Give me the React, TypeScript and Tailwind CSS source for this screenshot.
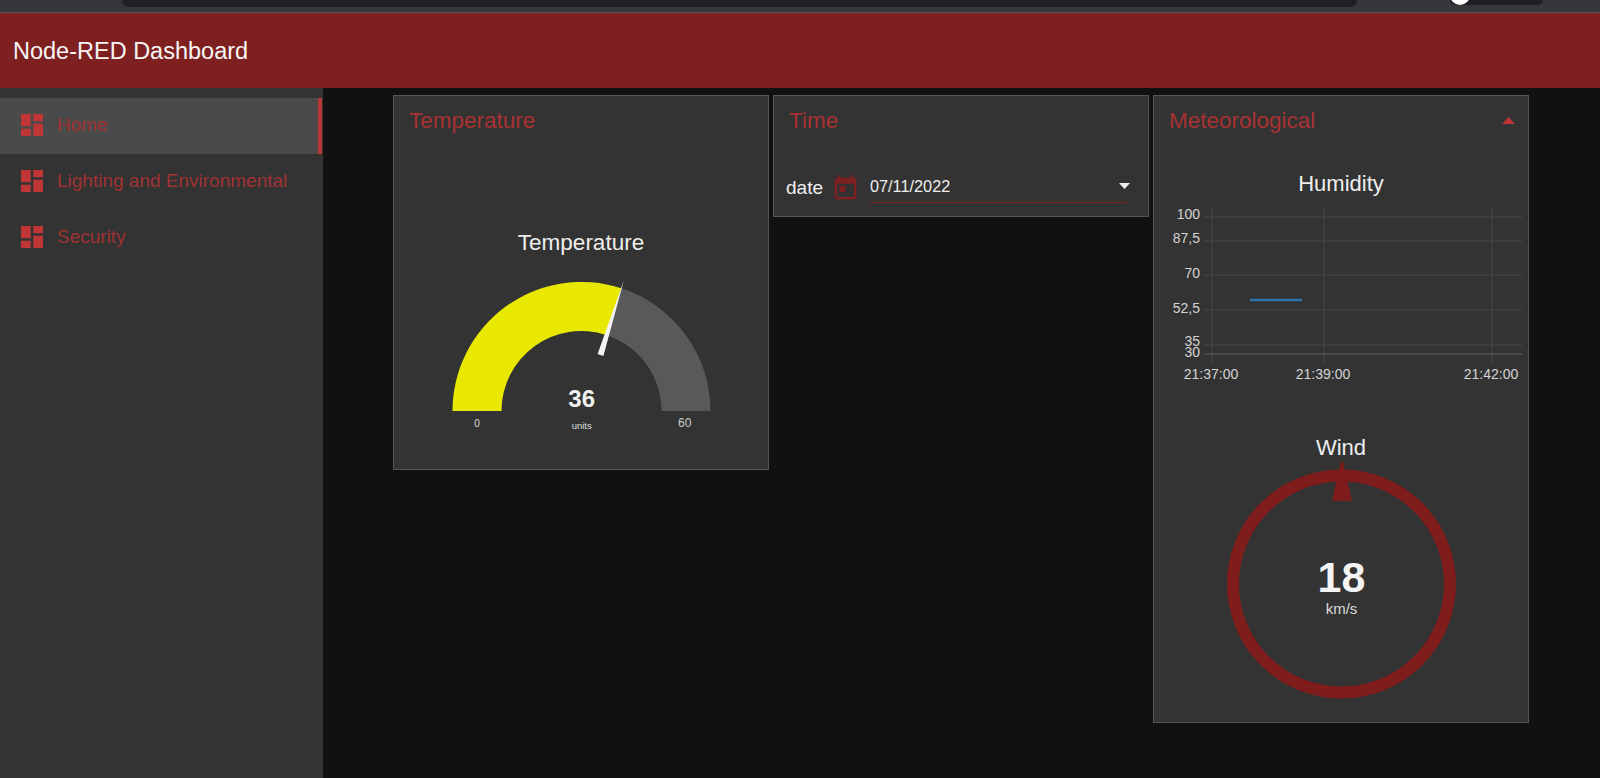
const Dash = () => (
  <svg width="22" height="22" viewBox="3 3 18 18" className="shrink-0 fill-[#c03535]">
    <path d="M3 13h8V3H3v10zm0 8h8v-6H3v6zm10 0h8V11h-8v10zm0-18v6h8V3h-8z" />
  </svg>
);

const NavItem = ({ label, active }: { label: string; active?: boolean }) => (
  <div
    className={`flex h-[56px] items-center gap-[14px] pb-[2px] pl-[21px] ${
      active ? "mr-px border-r-4 border-[#b83636] bg-[#4a4a4a]" : ""
    }`}
  >
    <Dash />
    <span className="text-[19px] text-[#a03232]">{label}</span>
  </div>
);

const Card = ({
  title,
  className,
  children,
  collapse,
}: {
  title: string;
  className: string;
  children: React.ReactNode;
  collapse?: boolean;
}) => (
  <section className={`flex w-[376px] shrink-0 flex-col border border-[#555555] bg-[#333333] ${className}`}>
    <header className="flex h-[50px] items-center justify-between pr-[13px] pb-[1px] pl-[15px]">
      <h2 className="text-[22.5px] leading-[26px] text-[#a83232]">{title}</h2>
      {collapse && (
        <svg width="13" height="7" viewBox="0 0 13 7" className="fill-[#c03535]">
          <path d="M6.5 0 13 7H0z" />
        </svg>
      )}
    </header>
    {children}
  </section>
);

const Gauge = () => (
  <svg width="280" height="170" viewBox="0 0 280 170" className="block">
    <path d="M11.5 141A129 129 0 0 1 180.4 18.3L165.2 64.9A80 80 0 0 0 60.5 141Z" fill="#e8e800" />
    <path d="M180.4 18.3A129 129 0 0 1 269.5 141L220.5 141A80 80 0 0 0 165.2 64.9Z" fill="#595959" />
    <path d="M183 10 162.4 85.900 156.600 84.100Z" fill="#f4f4f4" />
    <text x="36" y="157" textAnchor="middle" fontSize="10" fill="#dddddd">0</text>
    <text x="243.700" y="157" textAnchor="middle" fontSize="12" fill="#cccccc">60</text>
    <text x="140.700" y="137" textAnchor="middle" fontSize="24" fontWeight="700" fill="#f0f0f0">36</text>
    <text x="140.700" y="159" textAnchor="middle" fontSize="9.500" fill="#dddddd">units</text>
  </svg>
);

const Chart = () => {
  const ys: [number, string, number][] = [
    [12, "100", 14],
    [36, "87,5", 38],
    [70, "70", 73],
    [105, "52,5", 108],
    [140, "35", 141],
    [149, "30", 152],
  ];
  const xs: [number, string][] = [
    [58, "21:37:00"],
    [170, "21:39:00"],
    [338, "21:42:00"],
  ];
  return (
    <svg width="374" height="180" viewBox="0 0 374 180" className="block">
      {ys.map(([y, label, base]) => (
        <g key={label}>
          <line x1="50" x2="368" y1={y} y2={y} stroke={y === 149 ? "#5e5e5e" : "#484848"} />
          <text x="46" y={base} textAnchor="end" fontSize="14" fill="#d4d4d4">{label}</text>
        </g>
      ))}
      {xs.map(([x, label]) => (
        <g key={label}>
          <line x1={x} x2={x} y1="3" y2="158" stroke="#484848" />
          <text x={x - 1} y="174" textAnchor="middle" fontSize="14" fill="#d4d4d4">{label}</text>
        </g>
      ))}
      <line x1="96" x2="148" y1="95" y2="95" stroke="#2c76ad" strokeWidth="2.500" />
    </svg>
  );
};

const Wind = () => (
  <svg width="260" height="250" viewBox="0 0 260 250" className="block">
    <circle cx="130.500" cy="123" r="108.500" fill="none" stroke="#7f1d1d" strokeWidth="12" />
    <path d="M129.500 1h2.500L141 40H121Z" fill="#7f1d1d" />
    <text x="130.500" y="131" textAnchor="middle" fontSize="43" fontWeight="700" fill="#f4f4f4">18</text>
    <text x="130.500" y="153" textAnchor="middle" fontSize="15" fill="#dddddd">km/s</text>
  </svg>
);

export default function App() {
  return (
    <div className="flex h-screen flex-col overflow-hidden bg-[#111111] font-['Liberation_Sans',Arial,sans-serif] text-[#eeeeee]">
      <div className="flex h-[13px] shrink-0 items-start overflow-hidden border-b border-[#555555] bg-[#36373b]">
        <div className="ml-[122px] h-[7px] w-[1235px] rounded-b-[8px] bg-[#1f2024]" />
        <div className="relative ml-[93px] h-[5px] w-[93px] rounded-b-[8px] bg-[#1f2024]">
          <div className="absolute -top-[15px] left-0 h-[20px] w-[20px] rounded-full bg-white" />
        </div>
      </div>

      <header className="flex h-[75px] shrink-0 items-center bg-[#7f2020] pl-[13px]">
        <h1 className="text-[23.500px] leading-[28px] text-[#f6f6f6]">Node-RED Dashboard</h1>
      </header>

      <div className="flex min-h-0 flex-1">
        <nav className="w-[323px] shrink-0 bg-[#333333] pt-[10px]">
          <NavItem label="Home" active />
          <NavItem label="Lighting and Environmental" />
          <NavItem label="Security" />
        </nav>

        <main className="flex items-start gap-[4px] pt-[7px] pl-[70px]">
          <Card title="Temperature" className="h-[375px] items-stretch">
            <div className="flex flex-col items-center">
              <h3 className="mt-[84px] text-[22.500px] leading-[26px]">Temperature</h3>
              <div className="mt-[14px]">
                <Gauge />
              </div>
            </div>
          </Card>

          <Card title="Time" className="h-[122px]">
            <div className="mt-[27px] flex items-center pl-[12px]">
              <span className="text-[19px] leading-[24px]">date</span>
              <svg width="29" height="29" viewBox="0 0 24 24" className="ml-[8px] shrink-0 fill-[#7f2020]">
                <path d="M19 3h-1V1h-2v2H8V1H6v2H5c-1.11 0-1.99.9-1.99 2L3 19c0 1.1.89 2 2 2h14c1.1 0 2-.9 2-2V5c0-1.1-.9-2-2-2zm0 16H5V8h14v11zM7 10h5v5H7z" />
              </svg>
              <div className="ml-[10px] flex h-[30px] w-[257px] items-center justify-between border-b border-[#7f2020] pb-[3px]">
                <span className="text-[16.300px] leading-[20px]">07/11/2022</span>
                <svg width="11" height="6" viewBox="0 0 11 6" className="-mr-[3px] fill-[#eeeeee]">
                  <path d="M0 0h11L5.500 6z" />
                </svg>
              </div>
            </div>
          </Card>

          <Card title="Meteorological" className="h-[628px]" collapse>
            <div className="flex flex-col items-center">
              <h3 className="mt-[25px] text-[22px] leading-[26px]">Humidity</h3>
              <div className="mt-[8px]">
                <Chart />
              </div>
              <h3 className="mt-[50px] text-[22px] leading-[26px]">Wind</h3>
              <Wind />
            </div>
          </Card>
        </main>
      </div>
    </div>
  );
}
